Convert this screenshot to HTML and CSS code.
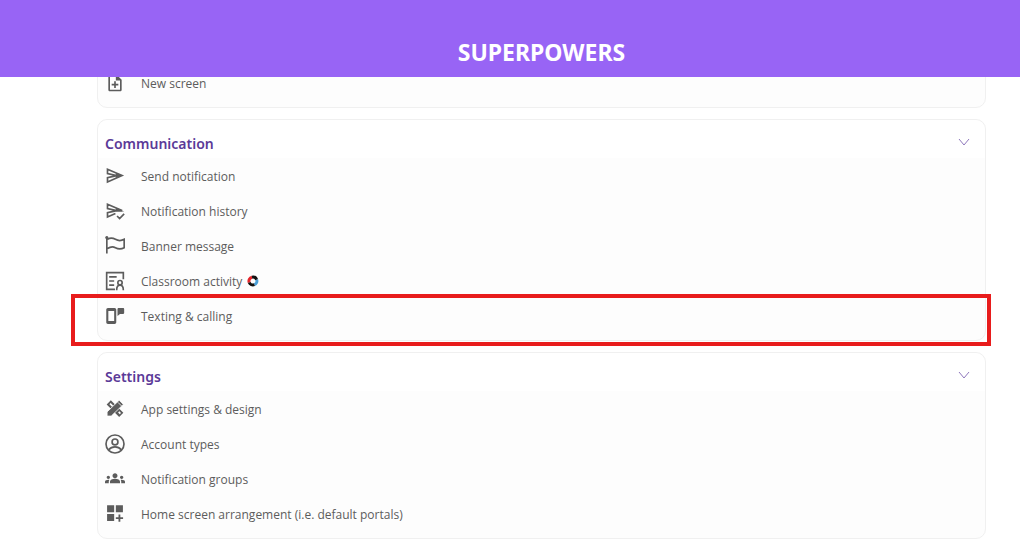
FILE: index.html
```html
<!DOCTYPE html>
<html lang="en">
<head>
  <meta charset="UTF-8">
  <title>Superpowers</title>
  <link rel="stylesheet" href="styles.css">
</head>
<body>
  <header class="top-bar">
    <h1>SUPERPOWERS</h1>
  </header>

  <main class="sections">
    <section class="card">
      <a class="item" href="#">
        <svg class="icon" viewBox="0 0 24 24"><path d="M14 2H6c-1.100 0-2 .9-2 2v16c0 1.100.9 2 2 2h12c1.100 0 2-.9 2-2V8zM18 20H6V4h7v5h5zM11 10h2v3h3v2h-3v3h-2v-3H8v-2h3z"/></svg>
        <span>New screen</span>
      </a>
    </section>

    <!-- Communication -->
    <section class="card">
      <h2>
        <button class="card-title" type="button">
          Communication
          <svg class="chevron" viewBox="0 0 12 8"><path d="M1 1l5 6 5-6"/></svg>
        </button>
      </h2>
      <a class="item" href="#">
        <svg class="icon" viewBox="0 0 24 24"><path class="line" d="M3 3.800L20.500 11.500 3 19.200v-5.200l11-2.500L3 9z"/><path d="M13 8.500l8 3-8 3z"/></svg>
        <span>Send notification</span>
      </a>
      <a class="item" href="#">
        <svg class="icon" viewBox="0 0 24 24"><path class="line" d="M12.500 15L3 19.200v-5.200l11-2.500L3 9V3.800L20.500 11.500H14M14.500 18l3 3 5.500-5.500"/><path d="M13 8.500l10 4H13z"/></svg>
        <span>Notification history</span>
      </a>
      <a class="item" href="#">
        <svg class="icon" viewBox="0 0 24 24"><path class="line" d="M2.200 1v20M3 4c3-2 6-2 9.500 0s7 2 10.500 0v10c-3.500 2-7 2-10.500 0S6 13 3 15"/><circle cx="2.200" cy="1.900" r="1.900"/></svg>
        <span>Banner message</span>
      </a>
      <a class="item" href="#">
        <svg class="icon" viewBox="0 0 24 24"><path class="line" d="M12 22H2V2h20v8M5 7h9M5 12h6M5 17h6M14 23c0-4 1.500-6 4-6s4 2 4 6"/><circle class="line" cx="18" cy="14" r="2.600"/></svg>
        <span>Classroom activity</span>
        <svg class="ring" viewBox="0 0 12 12">
          <path d="M2.200 7.500A4 4 0 0 1 5 2.200" stroke="#e5252a"/>
          <path d="M5 2.200a4 4 0 0 1 4.700 2.500" stroke="#111"/>
          <path d="M9.700 4.700a4 4 0 0 1-2.300 5" stroke="#4a9fd8"/>
          <path d="M7.400 9.700a4 4 0 0 1-5.200-2.200" stroke="#111"/>
        </svg>
      </a>
      <a class="item highlighted" href="#">
        <svg class="icon" viewBox="0 0 24 24"><path fill-rule="evenodd" d="M3.500 2.500h8c1.100 0 2 .9 2 2v15c0 1.100-.9 2-2 2h-8c-1.100 0-2-.9-2-2v-15c0-1.100.9-2 2-2zM4 6v12h7V6zM16.500 2.500h5.500c.6 0 1 .4 1 1V8.500c0 .6-.4 1-1 1h-4L15 12V4c0-.9.6-1.500 1.500-1.500z"/></svg>
        <span>Texting &amp; calling</span>
      </a>
    </section>

    <!-- Settings -->
    <section class="card">
      <h2>
        <button class="card-title" type="button">
          Settings
          <svg class="chevron" viewBox="0 0 12 8"><path d="M1 1l5 6 5-6"/></svg>
        </button>
      </h2>
      <a class="item" href="#">
        <svg class="icon" viewBox="0 0 24 24"><path fill-rule="evenodd" d="M7 1.500L22 16.500 17 21.500 2 6.500zM6.800 4.800L5.300 6.300 8.300 9.300 9.800 7.800zM17.200 14.700l-1.500 1.500 2 2 1.500-1.500z"/><path d="M17 1.500L22 6.500 7.500 20.500H2.500v-5z" stroke="#fdfdfd"/><path d="M15.500 4l4.500 4.500" stroke="#fdfdfd"/></svg>
        <span>App settings &amp; design</span>
      </a>
      <a class="item" href="#">
        <svg class="icon" viewBox="0 0 24 24"><circle class="line" cx="12" cy="12" r="10.800"/><circle class="line" cx="12" cy="9.500" r="3.500"/><path class="line" d="M4.500 19c2-2.500 4.500-3.500 7.500-3.500s5.500 1 7.500 3.500"/></svg>
        <span>Account types</span>
      </a>
      <a class="item" href="#">
        <svg class="icon" viewBox="0 0 24 24"><path d="M12 11.750c1.630 0 3.070.39 4.240.9 1.080.48 1.760 1.560 1.760 2.730V17H6v-1.610c0-1.180.68-2.260 1.760-2.730 1.170-.52 2.610-.91 4.240-.91zM4 12c1.100 0 2-.9 2-2s-.9-2-2-2-2 .9-2 2 .9 2 2 2zM5.130 13.100C4.760 13.040 4.390 13 4 13c-.99 0-1.930.21-2.780.58C.48 13.900 0 14.620 0 15.430V17h4.500v-1.610c0-.83.23-1.610.63-2.290zM20 12c1.100 0 2-.9 2-2s-.9-2-2-2-2 .9-2 2 .9 2 2 2zM24 15.430c0-.81-.48-1.530-1.220-1.850C21.930 13.210 20.990 13 20 13c-.39 0-.76.04-1.130.1.400.68.630 1.460.63 2.290V17H24zM12 5c1.660 0 3 1.340 3 3s-1.340 3-3 3-3-1.340-3-3 1.340-3 3-3z"/></svg>
        <span>Notification groups</span>
      </a>
      <a class="item" href="#">
        <svg class="icon" viewBox="0 0 24 24"><path d="M2.500 1.500h8.500v8.500H2.500zM13 1.500h8.500v8.500H13zM2.500 12h8.500v8.500H2.500zM16.200 12.500h2.200v3.300h3.300V18h-3.300v3.200h-2.200V18H13v-2.200h3.200z"/></svg>
        <span>Home screen arrangement (i.e. default portals)</span>
      </a>
    </section>
  </main>
</body>
</html>
```

FILE: styles.css
```css
body {
  margin: 0;
  background-color: #fff;
  color: #5c5c5c;
  font-family: "Open Sans", "Noto Sans", sans-serif;
  font-size: 12px;
}
.top-bar {
  position: fixed;
  top: 0;
  left: 0;
  right: 0;
  z-index: 2;
  padding: 36px 0 9px;
  background-color: #9864f5;
  color: #fff;
  text-align: center;
}
.top-bar h1 {
  margin: 0 0 0 63px;
  font-family: "Noto Sans", sans-serif;
  font-size: 23px;
  line-height: 32px;
  font-weight: 700;
}
.sections {
  display: flex;
  flex-direction: column;
  gap: 11px;
  padding: 64px 34px 8px 97px;
}
.card {
  padding-bottom: 7px;
  border: 1px solid #f0f0f0;
  border-radius: 10px;
  background-color: #fdfdfd;
}
.card h2 {
  margin: 0;
}
.card-title {
  display: flex;
  justify-content: space-between;
  align-items: center;
  width: 100%;
  height: 38px;
  padding: 8px 15px 0 7px;
  border: none;
  border-radius: 10px 10px 0 0;
  background-color: #fff;
  color: #5b3a98;
  font-family: "Noto Sans", sans-serif;
  font-size: 14px;
  font-weight: 600;
  cursor: pointer;
}
.chevron {
  width: 12px;
  height: 8px;
  margin-bottom: 2px;
  fill: none;
  stroke: #8f78bd;
}
.item {
  position: relative;
  display: flex;
  align-items: center;
  height: 35px;
  padding: 0 7px;
  color: inherit;
  text-decoration: none;
}
.item span {
  padding-top: 2px;
}
.icon {
  width: 20px;
  height: 20px;
  margin-right: 16px;
  fill: #5c5c5c;
}
.icon .line {
  fill: none;
  stroke: #5c5c5c;
  stroke-width: 2;
}
.ring {
  width: 12px;
  height: 12px;
  margin-left: 5px;
  fill: none;
  stroke-width: 3;
}
/* red frame around the item */
.highlighted::after {
  content: "";
  position: absolute;
  top: -4px;
  right: -6px;
  bottom: -13px;
  left: -27px;
  border: 4px solid #e81c1c;
}
```
